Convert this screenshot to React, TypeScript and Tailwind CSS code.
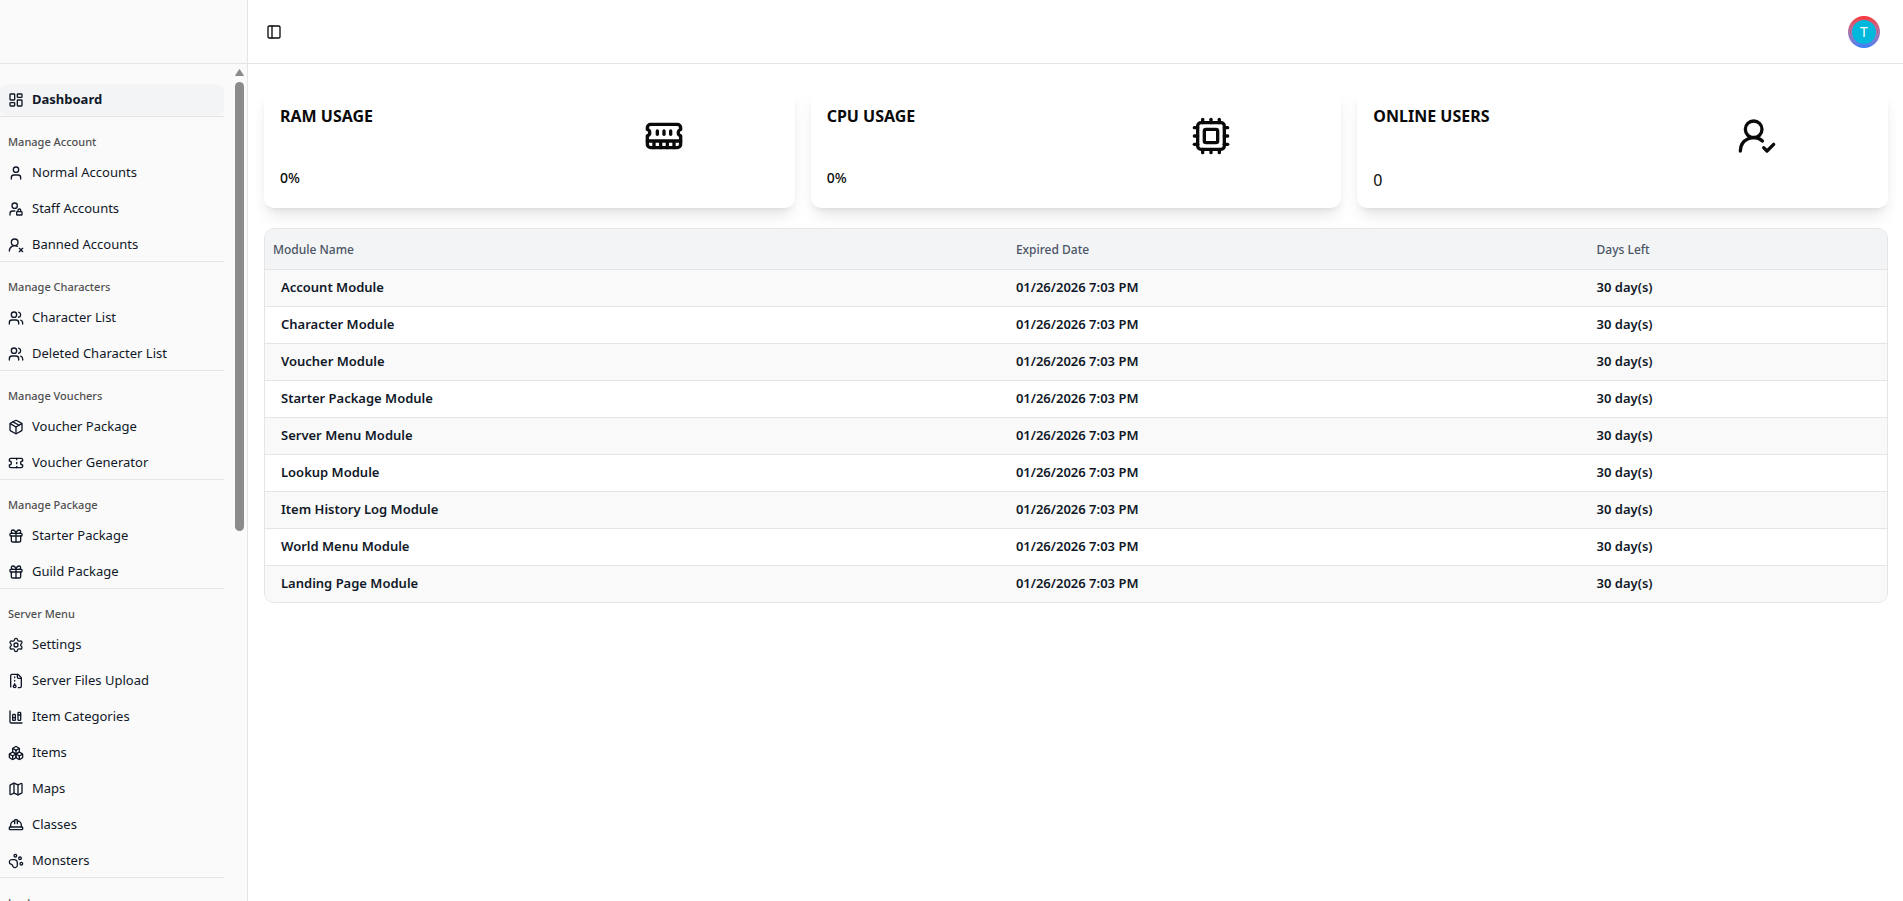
import type { ComponentType, ReactNode } from 'react';
import {
  Boxes, ChartColumnStacked, Cpu, Gift, HardHat, LayoutDashboard, Map, Package, PanelLeft,
  PawPrint, Settings, Ticket, User, UserLock, UserRoundCheck, UserRoundX, Users,
} from 'lucide-react';

type IconProps = { className?: string };
type IconType = ComponentType<IconProps>;

function Outline({ className, children }: IconProps & { children: ReactNode }) {
  return (
    <svg
      className={className}
      viewBox="0 0 24 24"
      fill="none"
      stroke="currentColor"
      strokeWidth="2"
      strokeLinecap="round"
      strokeLinejoin="round"
      aria-hidden="true"
    >
      {children}
    </svg>
  );
}

function ArchiveIcon({ className }: IconProps) {
  return (
    <Outline className={className}>
      <path d="M10 12v-1" />
      <path d="M10 18v-2" />
      <path d="M10 7V6" />
      <path d="M14 2v4a2 2 0 0 0 2 2h4" />
      <path d="M15.5 22H18a2 2 0 0 0 2-2V7l-5-5H6a2 2 0 0 0-2 2v16a2 2 0 0 0 .274 1.01" />
      <circle cx="10" cy="20" r="2" />
    </Outline>
  );
}

function MemoryIcon({ className }: IconProps) {
  return (
    <Outline className={className}>
      <path d="M6 19v-3" />
      <path d="M10 19v-3" />
      <path d="M14 19v-3" />
      <path d="M18 19v-3" />
      <path d="M8 11V9" />
      <path d="M16 11V9" />
      <path d="M12 11V9" />
      <path d="M2 15h20" />
      <path d="M2 7a2 2 0 0 1 2-2h16a2 2 0 0 1 2 2v1.1a2 2 0 0 0 0 3.837V17a2 2 0 0 1-2 2H4a2 2 0 0 1-2-2v-5.1a2 2 0 0 0 0-3.837Z" />
    </Outline>
  );
}

const groups: { label?: string; items: [string, IconType][] }[] = [
  { items: [['Dashboard', LayoutDashboard]] },
  { label: 'Manage Account', items: [['Normal Accounts', User], ['Staff Accounts', UserLock], ['Banned Accounts', UserRoundX]] },
  { label: 'Manage Characters', items: [['Character List', Users], ['Deleted Character List', Users]] },
  { label: 'Manage Vouchers', items: [['Voucher Package', Package], ['Voucher Generator', Ticket]] },
  { label: 'Manage Package', items: [['Starter Package', Gift], ['Guild Package', Gift]] },
  {
    label: 'Server Menu',
    items: [
      ['Settings', Settings], ['Server Files Upload', ArchiveIcon], ['Item Categories', ChartColumnStacked],
      ['Items', Boxes], ['Maps', Map], ['Classes', HardHat], ['Monsters', PawPrint],
    ],
  },
  { label: 'Lookup', items: [] },
];

const modules = [
  'Account Module', 'Character Module', 'Voucher Module', 'Starter Package Module', 'Server Menu Module',
  'Lookup Module', 'Item History Log Module', 'World Menu Module', 'Landing Page Module',
];

const stats: { title: string; value: string; icon: IconType; large?: boolean }[] = [
  { title: 'RAM USAGE', value: '0%', icon: MemoryIcon },
  { title: 'CPU USAGE', value: '0%', icon: Cpu },
  { title: 'ONLINE USERS', value: '0', icon: UserRoundCheck, large: true },
];

function Sidebar() {
  return (
    <aside className="flex w-62 shrink-0 flex-col border-r border-[#e5e5e5] bg-[#fafafa]">
      <div className="h-16 shrink-0 border-b border-[#e5e5e5]" />
      <div className="flex min-h-0 flex-1">
        <nav className="min-w-0 flex-1 overflow-hidden pt-5 pr-[11px]">
          {groups.map((group, i) => (
            <section key={i} className={group.label ? 'border-b border-[#e5e5e5] pt-2' : 'border-b border-[#e5e5e5]'}>
              {group.label && (
                <h2 className="flex h-8 items-center px-2 pt-0.5 text-[11px] font-medium text-[#505050]">{group.label}</h2>
              )}
              <ul className="flex flex-col gap-1">
                {group.items.map(([name, Icon]) => (
                  <li key={name}>
                    <a
                      href="#"
                      className={
                        group.label
                          ? 'flex h-8 items-center gap-2 px-2 text-[13px] whitespace-nowrap text-[#101828]'
                          : 'flex h-8 items-center gap-2 rounded-lg bg-gray-100 px-2 text-[13px] font-bold whitespace-nowrap text-[#101828]'
                      }
                    >
                      <Icon className="size-4 shrink-0" />
                      {name}
                    </a>
                  </li>
                ))}
              </ul>
            </section>
          ))}
        </nav>
        <div className="flex w-3 shrink-0 flex-col items-start gap-[5px] pt-[5px]" aria-hidden="true">
          <svg className="h-2 w-[9px]" viewBox="0 0 9 8" fill="#8b8b8b">
            <path d="M4 .6q.5-.6 1 0l3.7 5.6q.5.8-.5.8H.8q-1 0-.5-.8z" />
          </svg>
          <div className="h-[54%] w-[9px] rounded-full bg-[#8b8b8b]" />
        </div>
      </div>
    </aside>
  );
}

export default function App() {
  return (
    <div className="flex h-screen overflow-hidden bg-white font-['Segoe_UI','Noto_Sans',sans-serif] text-[#0a0a0a]">
      <Sidebar />
      <div className="flex min-w-0 flex-1 flex-col">
        <header className="flex h-16 shrink-0 items-center justify-between border-b border-[#e5e5e5] pr-[23px] pl-3">
          <button type="button" aria-label="Toggle sidebar" className="flex size-7 items-center justify-center">
            <PanelLeft className="size-4" />
          </button>
          <button type="button" aria-label="Account" className="size-8 rounded-full bg-linear-to-b from-[#fb2c36] to-[#2b7fff] p-1">
            <span className="flex size-6 items-center justify-center rounded-full bg-[#00b8db] text-sm text-white">T</span>
          </button>
        </header>
        <main className="flex flex-col gap-5 overflow-hidden pt-6 pr-[15px] pb-10 pl-4">
          <div className="grid grid-cols-3 gap-4">
            {stats.map(({ title, value, icon: Icon, large }) => (
              <section key={title} className="flex h-30 justify-between rounded-[10px] bg-white p-4 shadow-lg">
                <div className="flex flex-col gap-9">
                  <h2 className="font-bold">{title}</h2>
                  <p className={large ? 'pt-1 text-base' : 'pt-1 text-sm font-medium'}>{value}</p>
                </div>
                <div className="w-[27%] pt-3">
                  <Icon className="size-10" />
                </div>
              </section>
            ))}
          </div>
          <div className="overflow-hidden rounded-[10px] border border-[#e5e5e5]">
            <table className="w-full table-fixed border-separate border-spacing-0 text-left">
              <thead className="bg-gray-100 text-xs text-[#4a5565]">
                <tr className="h-[41px] *:border-b *:border-[#e5e5e5] *:px-2 *:pt-0.5 *:font-medium">
                  <th className="w-[45.8%]">Module Name</th>
                  <th className="w-[35.8%]">Expired Date</th>
                  <th>Days Left</th>
                </tr>
              </thead>
              <tbody className="text-[13px] font-semibold text-[#101828]">
                {modules.map((name) => (
                  <tr key={name} className="h-[37px] *:border-b *:border-[#e5e5e5] odd:bg-[#f9f9f9] last:h-9 last:*:border-b-0">
                    <td className="px-4">{name}</td>
                    <td className="px-2">01/26/2026 7:03 PM</td>
                    <td className="px-2">30 day(s)</td>
                  </tr>
                ))}
              </tbody>
            </table>
          </div>
        </main>
      </div>
    </div>
  );
}
